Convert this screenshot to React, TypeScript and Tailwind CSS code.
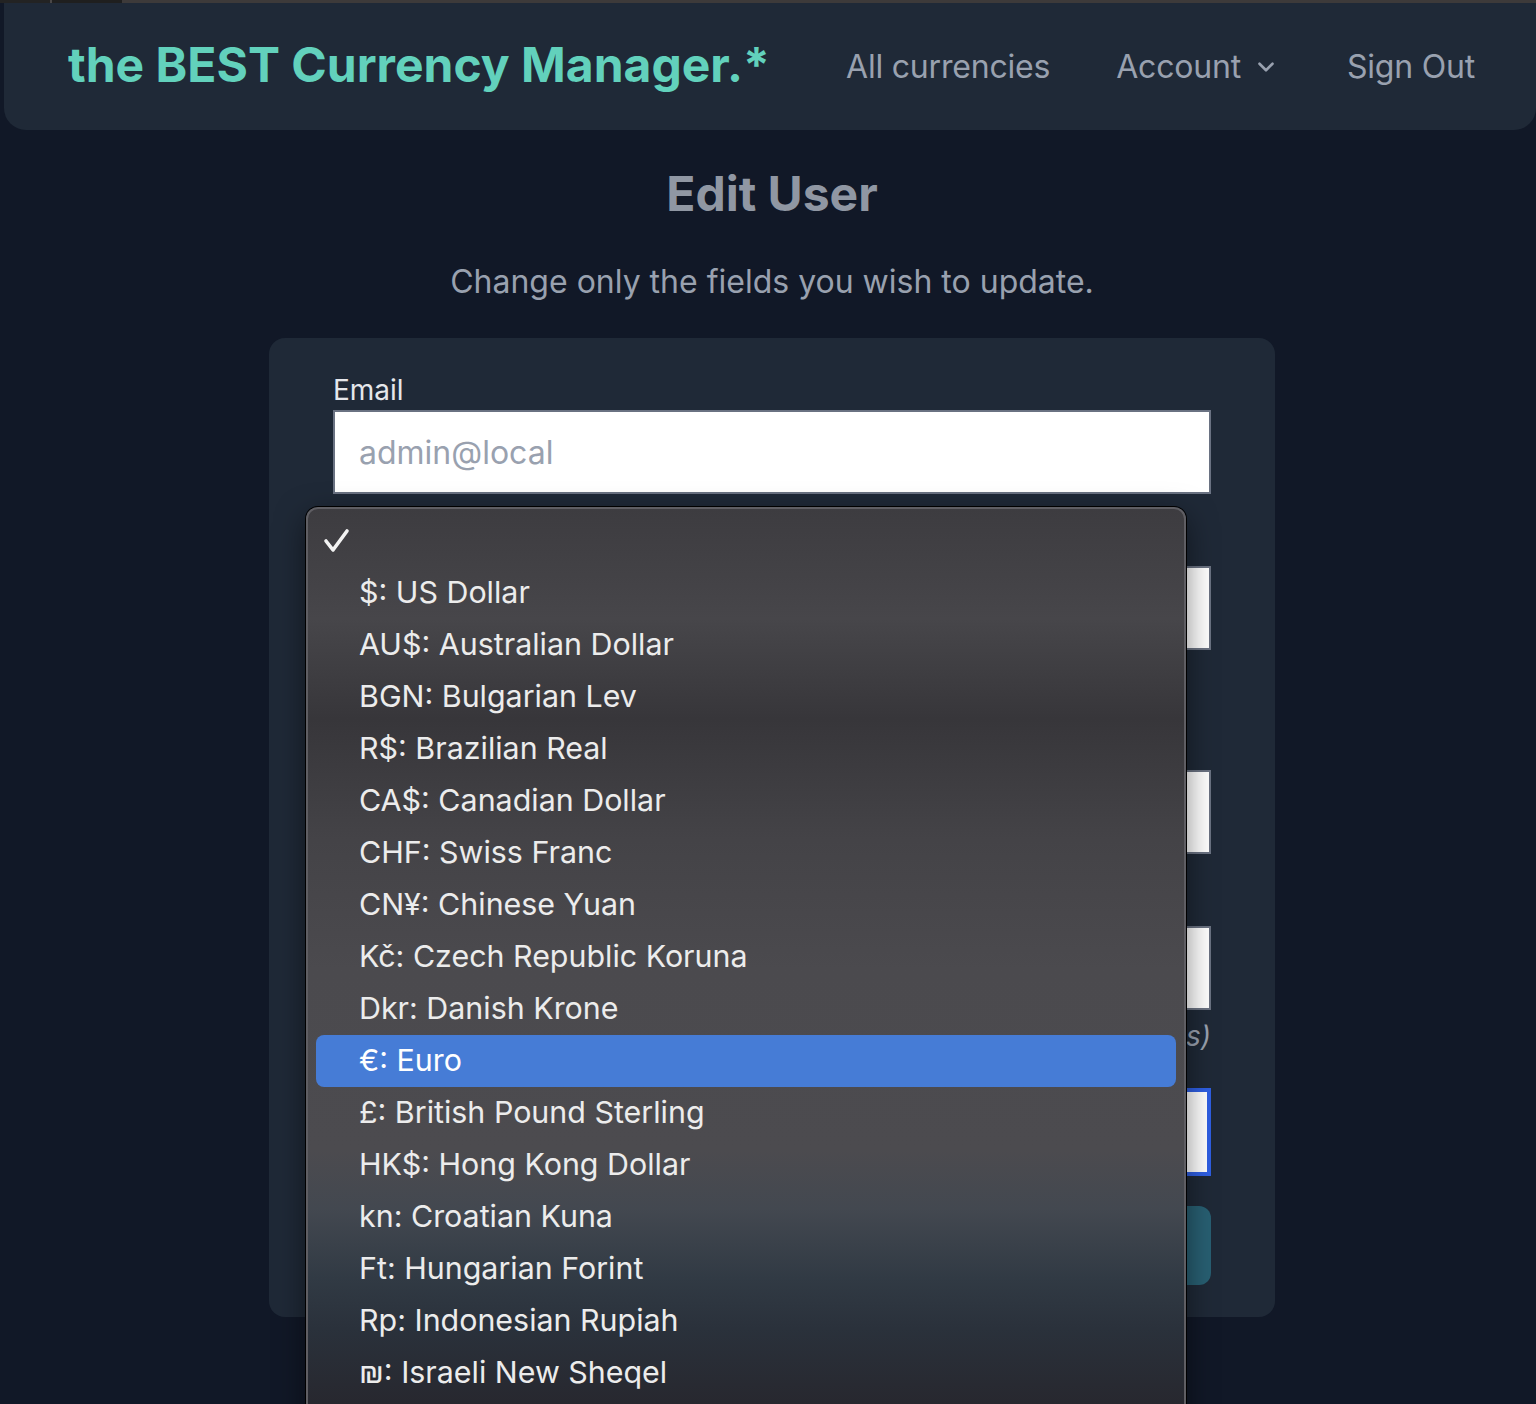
import { ChevronDown } from "lucide-react";

const currencies = [
  "$: US Dollar",
  "AU$: Australian Dollar",
  "BGN: Bulgarian Lev",
  "R$: Brazilian Real",
  "CA$: Canadian Dollar",
  "CHF: Swiss Franc",
  "CN¥: Chinese Yuan",
  "Kč: Czech Republic Koruna",
  "Dkr: Danish Krone",
  "€: Euro",
  "£: British Pound Sterling",
  "HK$: Hong Kong Dollar",
  "kn: Croatian Kuna",
  "Ft: Hungarian Forint",
  "Rp: Indonesian Rupiah",
  "₪: Israeli New Sheqel",
  "₹: Indian Rupee",
];

function Field({ label, placeholder }: { label: string; placeholder?: string }) {
  return (
    <div className="flex flex-col">
      <label className="text-[28px] leading-[40px] text-gray-200">{label}</label>
      <input
        placeholder={placeholder}
        className="h-[84px] w-full border-2 border-gray-500 bg-white px-[24px] text-[32px] text-gray-900 placeholder:text-gray-400 outline-none"
      />
    </div>
  );
}

function CurrencyMenu() {
  return (
    <div className="absolute left-[306px] top-[507px] h-[940px] w-[880px] overflow-hidden rounded-t-[12px] border-2 border-[#5f5e63] bg-[linear-gradient(180deg,#3d3c40_0px,#47464a_110px,#37363a_210px,#444347_330px,#4b4a4e_460px,#4c4b4f_640px,#434850_700px,#313a44_770px,#2a313b_820px,#27272e_900px)] pt-[6px] shadow-[0_0_0_1px_#000,0_10px_30px_rgba(0,0,0,0.5)]">
      <div className="flex h-[52px] items-center pl-[15px]">
        <svg width="28" height="28" viewBox="0 0 28 28" fill="none">
          <polyline
            points="3,14 10,23 24,4"
            stroke="#f2f2f2"
            strokeWidth="3.6"
            strokeLinecap="round"
            strokeLinejoin="round"
          />
        </svg>
      </div>
      {currencies.map((c) => (
        <div
          key={c}
          className={
            c === "€: Euro"
              ? "mx-[8px] flex h-[52px] items-center rounded-[8px] bg-[#467cd6] pl-[43px] text-[30.4px] text-white"
              : "mx-[8px] flex h-[52px] items-center pl-[43px] text-[30.4px] text-[#ececec]"
          }
        >
          {c}
        </div>
      ))}
    </div>
  );
}

export default function App() {
  return (
    <div className="relative h-[1404px] overflow-hidden bg-[#111827] font-['Inter','Noto_Sans',sans-serif]">
      <div className="flex h-[3px]">
        <div className="w-[50px] bg-[#232323]" />
        <div className="w-[2px] bg-[#4a4747]" />
        <div className="w-[70px] bg-[#1f1f1f]" />
        <div className="flex-1 bg-[#3d3a3a]" />
      </div>

      <nav className="ml-[4px] flex h-[127px] items-center justify-between rounded-b-[22px] bg-[#1f2937] pl-[64px] pr-[61px]">
        <h1 className="mb-[4px] text-[48px] font-bold text-[#62d1bc]">the BEST Currency Manager.*</h1>
        <div className="flex items-center gap-[66px] text-[32px] tracking-[-0.2px] text-gray-400">
          <a>All currencies</a>
          <a className="flex items-center gap-[12px]">
            Account
            <ChevronDown size={26} strokeWidth={2.4} />
          </a>
          <a className="ml-[2px]">Sign Out</a>
        </div>
      </nav>

      <main className="ml-[8px]">
        <h2 className="mt-[40px] text-center text-[48px] leading-[48px] font-bold text-[#9097a3]">Edit User</h2>
        <p className="mt-[48px] text-center text-[32px] leading-[32px] text-gray-400">
          Change only the fields you wish to update.
        </p>

        <div className="mx-auto mt-[40px] w-[1006px] rounded-[16px] bg-[#1f2937] px-[64px] pb-[32px] pt-[32px]">
          <Field label="Email" placeholder="admin@local" />
          <div className="mt-[32px]">
            <Field label="Default currency" />
          </div>
          <div className="mt-[32px] flex flex-col">
            <label className="text-[28px] leading-[40px] text-gray-200">Name</label>
            <p className="mb-[8px] text-[28px] leading-[40px] text-gray-400">Shown in the navigation bar</p>
            <input className="h-[84px] w-full border-2 border-gray-500 bg-white px-[24px] text-[32px] outline-none" />
          </div>
          <div className="mt-[32px]">
            <Field label="New password" />
            <p className="mt-[6px] text-right text-[28px] leading-[40px] italic text-gray-400">
              (leave blank to keep the current one, at least 8 characters)
            </p>
          </div>
          <input className="mt-[32px] h-[88px] w-full border-4 border-[#2f5fe3] bg-white px-[24px] text-[32px] outline-none" />
          <button className="mt-[30px] h-[79px] w-full rounded-[12px] bg-[#285f72] text-[32px] font-semibold text-gray-200">
            Save
          </button>
        </div>
      </main>

      <CurrencyMenu />
    </div>
  );
}
